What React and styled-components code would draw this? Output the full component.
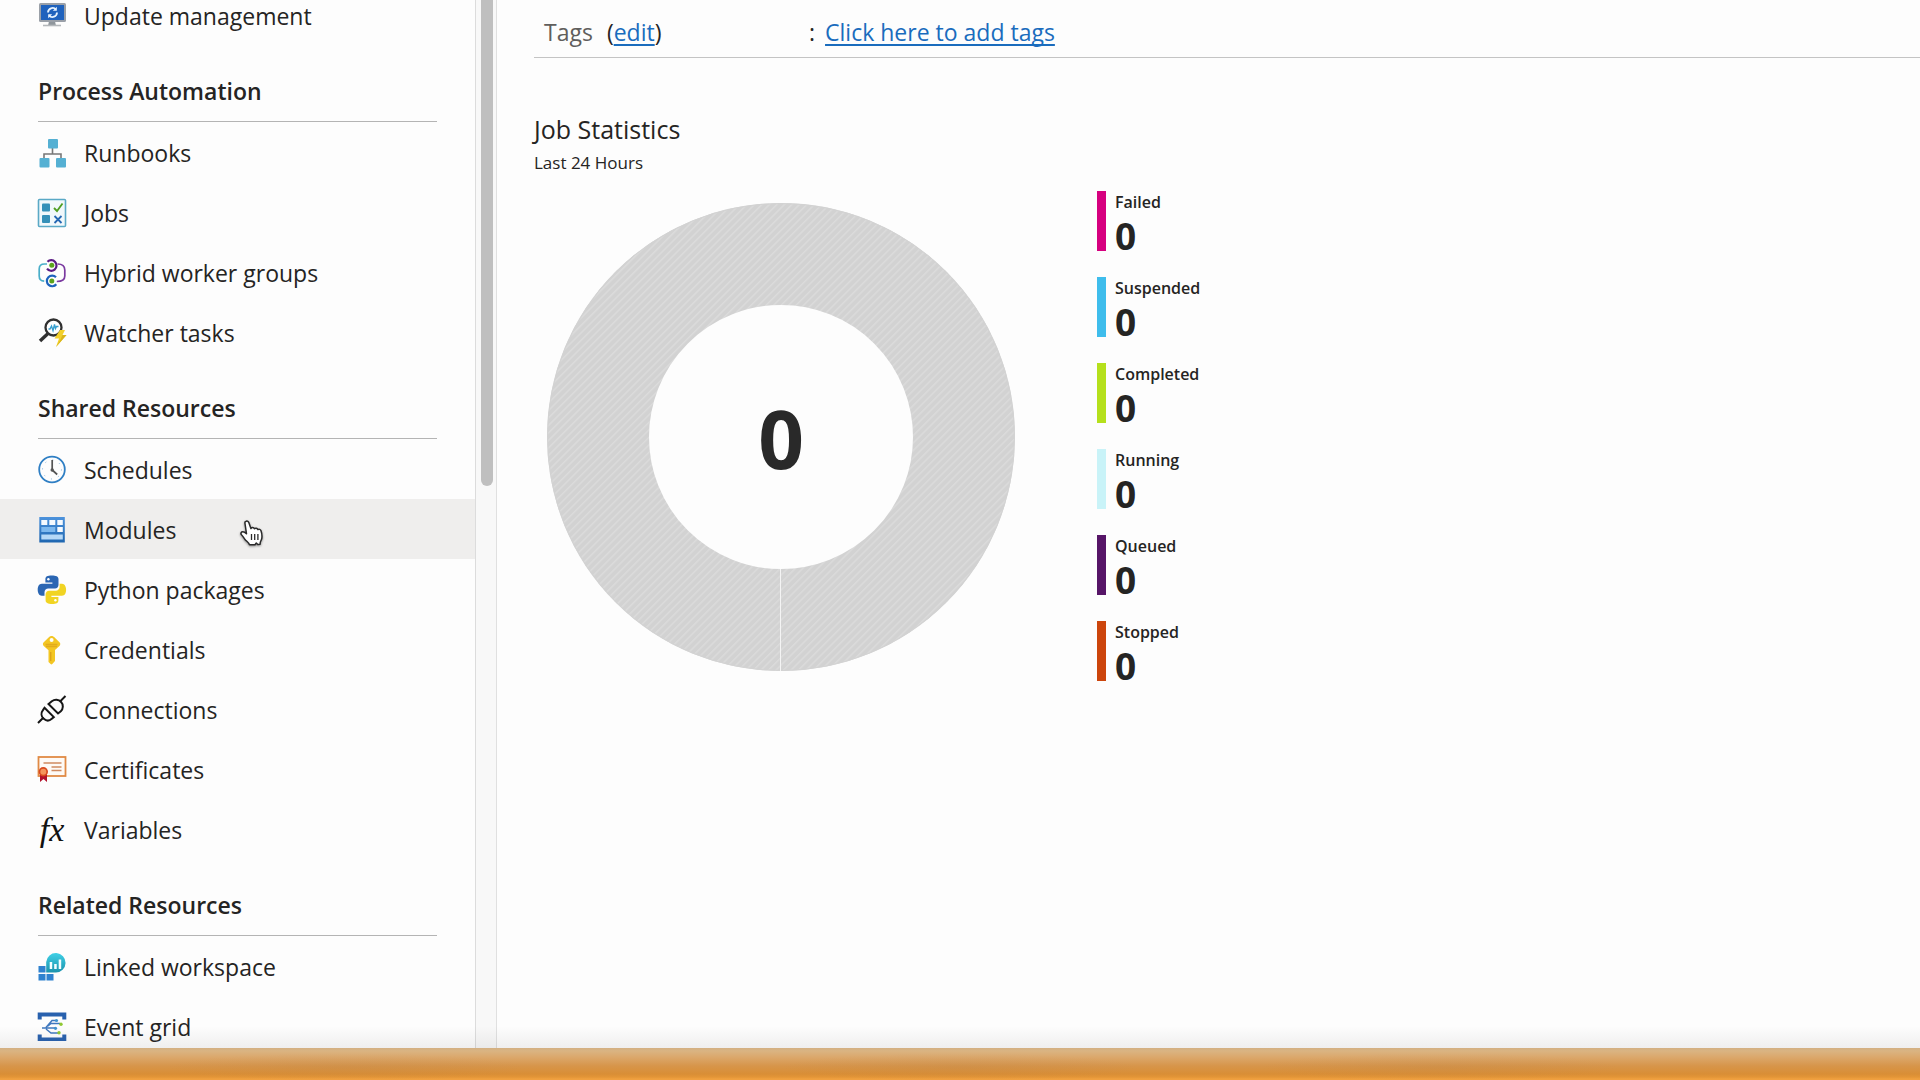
import React from 'react';
import styled, { createGlobalStyle } from 'styled-components';

const GlobalStyle = createGlobalStyle`
  *, *::before, *::after { box-sizing: border-box; }
  body {
    margin: 0;
    background: #fdfdfd;
    color: #252423;
    font-family: "Open Sans", "Noto Sans", sans-serif;
    overflow: hidden;
  }
`;

const Shell = styled.div`
  display: flex;
  flex-direction: column;
  height: 100vh;
`;

const Workspace = styled.div`
  position: relative;
  display: flex;
  flex: 1;
  min-height: 0;
  overflow: hidden;

  &::after {
    content: "";
    position: absolute;
    inset: auto 0 0 0;
    height: 22px;
    background: linear-gradient(rgba(60, 50, 50, 0), rgba(60, 50, 50, 0.07));
    pointer-events: none;
  }
`;

const Sidebar = styled.aside`
  flex: 0 0 476px;
  overflow: hidden;
  border-right: 1px solid #dcdcdc;
`;

const Menu = styled.nav`
  margin-top: -15px;
`;

const GroupTitle = styled.h2`
  margin: 0 38px;
  padding: 31px 0 15px;
  border-bottom: 1px solid #b4b4b4;
  font-size: 23px;
  font-weight: 600;
  line-height: 30px;
`;

const List = styled.ul`
  margin: 0;
  padding: 0;
  list-style: none;
`;

const Row = styled.li`
  position: relative;
`;

const MenuLink = styled.a`
  display: flex;
  align-items: center;
  gap: 18px;
  height: 60px;
  padding: 2px 38px 0;
  background: ${({ $active }) => ($active ? '#efeeed' : 'transparent')};
  color: inherit;
  font-size: 23px;
  line-height: 30px;
  text-decoration: none;
`;

const Icon = styled.svg`
  flex: none;
  width: 28px;
  height: 28px;
  overflow: visible;
`;

const FxMark = styled.span`
  flex: none;
  width: 28px;
  color: #111;
  font-family: "Liberation Serif", serif;
  font-size: 34px;
  font-style: italic;
  line-height: 30px;
  text-align: center;
`;

const Pointer = styled.svg`
  position: absolute;
  top: 21px;
  left: 240px;
  width: 24px;
  height: 26px;
  overflow: visible;
  filter: drop-shadow(0 1px 1px rgba(0, 0, 0, 0.4));
`;

const ScrollTrack = styled.div`
  flex: 0 0 21px;
  padding: 0 3px 0 5px;
  border-right: 1px solid #e0e0e0;
  background: #f8f8f8;
`;

const ScrollThumb = styled.div`
  width: 12px;
  height: 486px;
  border-radius: 0 0 6px 6px;
  background: #bfbfbf;
`;

const Main = styled.main`
  flex: 1;
  min-width: 0;
  padding-left: 37px;
`;

const TagsBar = styled.dl`
  display: grid;
  grid-template-columns: 265px 1fr;
  margin: 0;
  padding: 17px 0 10px 10px;
  border-bottom: 1px solid #c4c4c4;
  font-size: 23px;
  line-height: 30px;
`;

const TagsLabel = styled.dt`
  display: flex;
  gap: 14px;
`;

const Muted = styled.span`
  color: #605e5c;
`;

const TagsValue = styled.dd`
  display: flex;
  gap: 10px;
  margin: 0;
`;

const TextLink = styled.a`
  color: #1a6cbd;
  text-decoration: underline;
  text-decoration-thickness: 2px;
  text-underline-offset: 3px;
  text-decoration-skip-ink: none;
`;

const StatsTitle = styled.h1`
  margin: 54px 0 5px;
  font-size: 25px;
  font-weight: 400;
  line-height: 34px;
`;

const StatsPeriod = styled.p`
  margin: 0;
  font-size: 17px;
  line-height: 24px;
`;

const StatsBody = styled.div`
  display: flex;
  gap: 81px;
  padding: 16px 0 0 12px;
`;

const Donut = styled.svg`
  flex: none;
  width: 470px;
  height: 470px;
  margin-top: 11px;
`;

const DonutTotal = styled.text`
  fill: #292929;
  font-size: 80px;
  font-weight: 700;
  text-anchor: middle;
`;

const Legend = styled.ul`
  display: flex;
  flex-direction: column;
  gap: 26px;
  margin: 0;
  padding: 0;
  list-style: none;
`;

const LegendItem = styled.li`
  height: 60px;
  padding-left: 9px;
  border-left: 9px solid ${({ $color }) => $color};
`;

const LegendName = styled.div`
  font-size: 16px;
  font-weight: 600;
  line-height: 22px;
`;

const LegendValue = styled.div`
  padding-top: 8px;
  font-size: 37px;
  font-weight: 700;
  line-height: 30px;
`;

const Dock = styled.footer`
  flex: 0 0 32px;
  background:
    radial-gradient(ellipse 180px 14px at 18% 60%, rgba(170, 120, 70, 0.14), transparent),
    radial-gradient(ellipse 180px 14px at 50% 60%, rgba(170, 120, 70, 0.14), transparent),
    radial-gradient(ellipse 180px 14px at 75% 60%, rgba(170, 120, 70, 0.14), transparent),
    linear-gradient(#d3b083 0, #dab482 3px, #dba86c 9px, #d7954a 18px, #d98e36 26px, #e39537 29px, #f0a040 31px);
`;

const icons = {
  update: (
    <Icon viewBox="0 0 28 28">
      <path d="M11 19h6l1 5H10z" fill="#8f969c" />
      <path d="M5 23.500h18" stroke="#b4b8bb" strokeWidth="1.600" />
      <rect x="1" y="1" width="27" height="19" rx="1.500" fill="#9aa0a8" />
      <rect x="3" y="3" width="23" height="15" fill="#1f62bd" />
      <path d="M10 10.500a4.600 4.600 0 0 1 8-3M19 10.500a4.600 4.600 0 0 1-8 3" fill="none" stroke="#e8f4ff" strokeWidth="1.800" />
      <path d="M18.800 4.800v4h-4zM10.200 16.200v-4h4z" fill="#e8f4ff" />
    </Icon>
  ),
  runbooks: (
    <Icon viewBox="0 0 28 28">
      <path d="M14.500 9v6M6 21v-6h17v6" fill="none" stroke="#777" strokeWidth="1.600" />
      <rect x="10" y="0" width="10" height="9.500" rx="1" fill="#55b0d3" />
      <rect x="1.500" y="19" width="10" height="9.500" rx="1" fill="#55b0d3" />
      <rect x="18" y="19" width="10" height="9.500" rx="1" fill="#55b0d3" />
    </Icon>
  ),
  jobs: (
    <Icon viewBox="0 0 28 28">
      <rect x="0.500" y="0.500" width="27" height="27" rx="1" fill="#f1f8fb" stroke="#5aa9c6" strokeWidth="1.600" />
      <rect x="4" y="4.500" width="8" height="8" rx="1" fill="#3590b8" />
      <rect x="4" y="16" width="8" height="8" rx="1" fill="#3590b8" />
      <path d="M16 9l3 3 5.500-7.500" fill="none" stroke="#4f9e22" strokeWidth="1.800" />
      <path d="M16.500 17l7 7M23.500 17l-7 7" stroke="#2467b3" strokeWidth="1.800" />
    </Icon>
  ),
  hybrid: (
    <Icon viewBox="0 0 28 28" fill="none" strokeWidth="1.700">
      <path d="M9 5H6.500C3 5 1.200 7 1.200 10v7c0 3 1.800 5 5 5.200" stroke="#4aaec9" />
      <path d="M19.500 5c5 0 7.300 2 7.300 6v6c0 3.500-2 5.500-8 5.500" stroke="#7b3aa0" />
      <path d="M9.500 2.700a5.300 5.300 0 1 1-.5 7" stroke="#5b1c84" strokeWidth="2.200" />
      <path d="M18 18.300a5.300 5.300 0 1 0 .3 7" stroke="#1d63bd" strokeWidth="2.200" />
      <circle cx="13.800" cy="6.200" r="2.500" fill="#5ba31c" />
      <circle cx="13.800" cy="22" r="2.500" fill="#5ba31c" />
    </Icon>
  ),
  watcher: (
    <Icon viewBox="0 0 28 28">
      <path d="M2 22l8-7.500" stroke="#303030" strokeWidth="3.400" />
      <circle cx="15.500" cy="8.500" r="8" fill="#fff" stroke="#303030" strokeWidth="2.300" />
      <path d="M10.500 10h1.500l1.500-3 1.500 4.500 1.500-6 1 4 1-2h2" fill="none" stroke="#38a0d0" strokeWidth="1.400" />
      <path d="M22 11h5L24.500 16h4L18 28l3-8.500h-4.500z" fill="#f2d02b" />
      <path d="M24.500 16h4L18 28l4-6.500z" fill="#d9b51c" />
    </Icon>
  ),
  schedules: (
    <Icon viewBox="0 0 28 28">
      <circle cx="14" cy="13.500" r="12.800" fill="#fdfdfd" stroke="#2f7fc4" strokeWidth="1.800" />
      <circle cx="14" cy="13.500" r="9.500" fill="none" stroke="#7bb0dc" strokeWidth="1" strokeDasharray="1 6.460" />
      <path d="M14.200 4v10l5 4.500" fill="none" stroke="#555" strokeWidth="1.700" />
      <circle cx="14.200" cy="14" r="1.700" fill="#555" />
    </Icon>
  ),
  modules: (
    <Icon viewBox="0 0 28 28">
      <defs>
        <linearGradient id="moduleFrame" x2="0" y2="1">
          <stop stopColor="#4c92dc" />
          <stop offset="1" stopColor="#1f66b0" />
        </linearGradient>
      </defs>
      <rect x="1.300" y="1" width="25.500" height="25.500" fill="url(#moduleFrame)" />
      <path d="M3.300 4h6v5h-6zM11.300 4h6v5h-6zM19.300 4h5.500v5h-5.500zM19.300 11h5.500v5h-5.500z" fill="#f5faff" />
      <path d="M3.300 11h14v5h-14z" fill="#7db8ee" />
      <path d="M3.300 18.500h21.500v5H3.300z" fill="#b5d8f7" />
    </Icon>
  ),
  python: (
    <Icon viewBox="0 0 28 28">
      <path
        d="M13.700-.5C9.400-.5 7.400.5 7.400 3v3.500h7v1.200H3.900C.9 7.700-.3 10.500-.3 13.700s1.500 6 4 6h2.800v-3.500c0-2 1.700-3.700 3.800-3.700h6.700c2 0 3.500-1.600 3.500-3.500V3c0-2.500-2.500-3.500-6.800-3.500z"
        fill="#2b66b3"
      />
      <path
        d="M14.100 28c4.300 0 6.300-1 6.300-3.500V21h-7v-1.200h10.500c3 0 4.200-2.800 4.200-6s-1.500-6-4-6h-2.500v3.300c0 2-1.700 3.700-3.800 3.700h-6.700c-2 0-3.500 1.600-3.500 3.500v6c0 2.700 2.300 3.700 6.500 3.700z"
        fill="#f1d423"
      />
      <circle cx="10.400" cy="3.300" r="1.200" fill="#fff" />
      <circle cx="17.400" cy="24.200" r="1.200" fill="#fff" />
    </Icon>
  ),
  credentials: (
    <Icon viewBox="0 0 28 28">
      <path
        d="M13.500 0c1 0 2 .5 2.600 1.100l5.600 5.500c.8.900.8 2.200 0 3.100L17 14v11l-2.700 3c-.6.500-1.200.5-1.700 0L10.500 26V14.200L5.500 9.700c-.8-.9-.8-2.200 0-3.100l5.600-5.500C11.700.5 12.500 0 13.500 0z"
        fill="#f3c623"
      />
      <path d="M7.500 8.500H19.500M8 10.500h11" stroke="#e3ab1c" strokeWidth="1.400" />
      <path d="M12.700 16v9" stroke="#dda41a" strokeWidth="1.400" />
      <circle cx="13.600" cy="4" r="2" fill="#fdfdfd" />
    </Icon>
  ),
  connections: (
    <Icon viewBox="0 0 28 28" fill="none" stroke="#161616" strokeWidth="2">
      <path d="M0 27l5.500-5.500M22 5.500L27.500 0" />
      <path d="M6.500 11.800l9.300 9.300-2 1.700c-2.500 2.300-5.500 2.300-8 0-2.700-2.500-3-6-1-8.500z" />
      <path d="M10.500 8l9.500 9.500 2.800-2.300c2.500-2.500 2.800-6.500.3-9.200s-6.500-2.800-9.300-.8z" />
    </Icon>
  ),
  certificates: (
    <Icon viewBox="0 0 28 28">
      <rect x="0.500" y="1" width="27" height="19" fill="#fefaf6" stroke="#e08a45" strokeWidth="1.800" />
      <path d="M5.500 7h18M13.500 11h10M13.500 14.500h10" stroke="#cf8a60" strokeWidth="1.400" />
      <path d="M2 17.500h7V26l-3.500-3L2 26z" fill="#b3122c" />
      <circle cx="5.300" cy="15.700" r="4.700" fill="#d94a1e" />
      <circle cx="5.300" cy="15.700" r="3" fill="#f5955c" />
    </Icon>
  ),
  variables: <FxMark aria-hidden="true">fx</FxMark>,
  workspace: (
    <Icon viewBox="0 0 28 28">
      <defs>
        <linearGradient id="workspaceDrop" x2="0" y2="1">
          <stop stopColor="#3fd0e6" />
          <stop offset="1" stopColor="#1b93ad" />
        </linearGradient>
      </defs>
      <path d="M.5 13h7v6.500h-7zM.5 21h7v6.500h-7zM8.500 21h7v6.500h-7z" fill="#2f82cf" />
      <path d="M8.200 19.500V9A9.700 9.700 0 1 1 17.900 19.500z" fill="url(#workspaceDrop)" />
      <path d="M11.700 9h2.500v7h-2.500zM16.200 11h2.500v5h-2.500zM20.700 6.500h2.500V16h-2.500z" fill="#f4feff" />
    </Icon>
  ),
  eventGrid: (
    <Icon viewBox="0 0 28 28">
      <path d="M-.3-.5h28.600v7h-4v-3H3.700v3h-4zM-.3 28h28.600v-6.500h-4v3H3.700v-3h-4z" fill="#2861ae" />
      <path d="M4 15h13M8 14.500l6-7h4M10 13l3-2.500h9M8 16l5 4h7" fill="none" stroke="#3f78bf" strokeWidth="1.500" />
      <circle cx="18.500" cy="7.500" r="1.600" fill="#3f94d0" />
      <circle cx="17.500" cy="15.300" r="1.600" fill="#3f94d0" />
      <circle cx="23" cy="11.300" r="1.700" fill="#8fc832" />
      <circle cx="21" cy="19.700" r="1.700" fill="#8fc832" />
    </Icon>
  ),
};

const groups = [
  { items: [['update', 'Update management']] },
  {
    title: 'Process Automation',
    items: [
      ['runbooks', 'Runbooks'],
      ['jobs', 'Jobs'],
      ['hybrid', 'Hybrid worker groups'],
      ['watcher', 'Watcher tasks'],
    ],
  },
  {
    title: 'Shared Resources',
    items: [
      ['schedules', 'Schedules'],
      ['modules', 'Modules'],
      ['python', 'Python packages'],
      ['credentials', 'Credentials'],
      ['connections', 'Connections'],
      ['certificates', 'Certificates'],
      ['variables', 'Variables'],
    ],
  },
  {
    title: 'Related Resources',
    items: [
      ['workspace', 'Linked workspace'],
      ['eventGrid', 'Event grid'],
    ],
  },
];

const statuses = [
  ['Failed', '#d6007f'],
  ['Suspended', '#3fbdec'],
  ['Completed', '#b5e01c'],
  ['Running', '#c9f3f8'],
  ['Queued', '#561567'],
  ['Stopped', '#cc450c'],
];

function HandPointer() {
  return (
    <Pointer viewBox="0 0 24 26" aria-hidden="true">
      <path
        d="M6.200 1.200c1.300-.5 2.300.3 2.700 1.500l2 5.800c.8-1.300 2.800-1.300 3.500.3 1-1 2.800-.8 3.400.8 1.200-.8 2.700-.2 3.200 1.200.9 2.600 1.200 5 .8 7.500-.3 1.800-1.200 2.700-1.500 4l-.2 2-2.300.2-1.500-1.500-1.300 1.700H9.500c-1-2.300-3-3.500-4.500-5.200-1.300-1.500-2-3.300-3.500-4.700-1.200-1.200-.3-3 1.300-3 1.300 0 2.700 1 3.700 2L5 3.500c-.3-1 .2-2 1.200-2.300z"
        fill="#fff"
        stroke="#2b2b2b"
        strokeWidth="1.500"
        strokeLinejoin="round"
      />
      <path d="M11.500 14v6M14.700 14v6M17.900 14v6" stroke="#2b2b2b" strokeWidth="1.300" />
    </Pointer>
  );
}

function JobDonut() {
  return (
    <Donut viewBox="0 0 470 470" role="img" aria-label="Total jobs: 0">
      <defs>
        <pattern id="hatch" width="5.300" height="5.300" patternUnits="userSpaceOnUse" patternTransform="rotate(45)">
          <rect width="5.300" height="5.300" fill="#d2d2d2" />
          <rect width="1.500" height="5.300" fill="#dbdbdb" />
        </pattern>
      </defs>
      <circle cx="235" cy="235" r="183" fill="none" stroke="url(#hatch)" strokeWidth="102" />
      <circle cx="235" cy="235" r="233.500" fill="none" stroke="#d3d3d3" />
      <path d="M234.500 367v102" stroke="#f4f4f4" strokeWidth="1" />
      <DonutTotal x="235" y="267">0</DonutTotal>
    </Donut>
  );
}

export default function App() {
  return (
    <>
      <GlobalStyle />
      <Shell>
        <Workspace>
          <Sidebar>
            <Menu aria-label="Automation account">
              {groups.map((group, index) => (
                <React.Fragment key={index}>
                  {group.title && <GroupTitle>{group.title}</GroupTitle>}
                  <List>
                    {group.items.map(([id, label]) => (
                      <Row key={id}>
                        <MenuLink href={`#${id}`} $active={id === 'modules'}>
                          {icons[id]}
                          {label}
                        </MenuLink>
                        {id === 'modules' && <HandPointer />}
                      </Row>
                    ))}
                  </List>
                </React.Fragment>
              ))}
            </Menu>
          </Sidebar>
          <ScrollTrack>
            <ScrollThumb />
          </ScrollTrack>
          <Main>
            <TagsBar>
              <TagsLabel>
                <Muted>Tags</Muted>
                <span>
                  (<TextLink href="#edit-tags">edit</TextLink>)
                </span>
              </TagsLabel>
              <TagsValue>
                <span>:</span>
                <TextLink href="#add-tags">Click here to add tags</TextLink>
              </TagsValue>
            </TagsBar>
            <StatsTitle>Job Statistics</StatsTitle>
            <StatsPeriod>Last 24 Hours</StatsPeriod>
            <StatsBody>
              <JobDonut />
              <Legend>
                {statuses.map(([name, color]) => (
                  <LegendItem key={name} $color={color}>
                    <LegendName>{name}</LegendName>
                    <LegendValue>0</LegendValue>
                  </LegendItem>
                ))}
              </Legend>
            </StatsBody>
          </Main>
        </Workspace>
        <Dock />
      </Shell>
    </>
  );
}
